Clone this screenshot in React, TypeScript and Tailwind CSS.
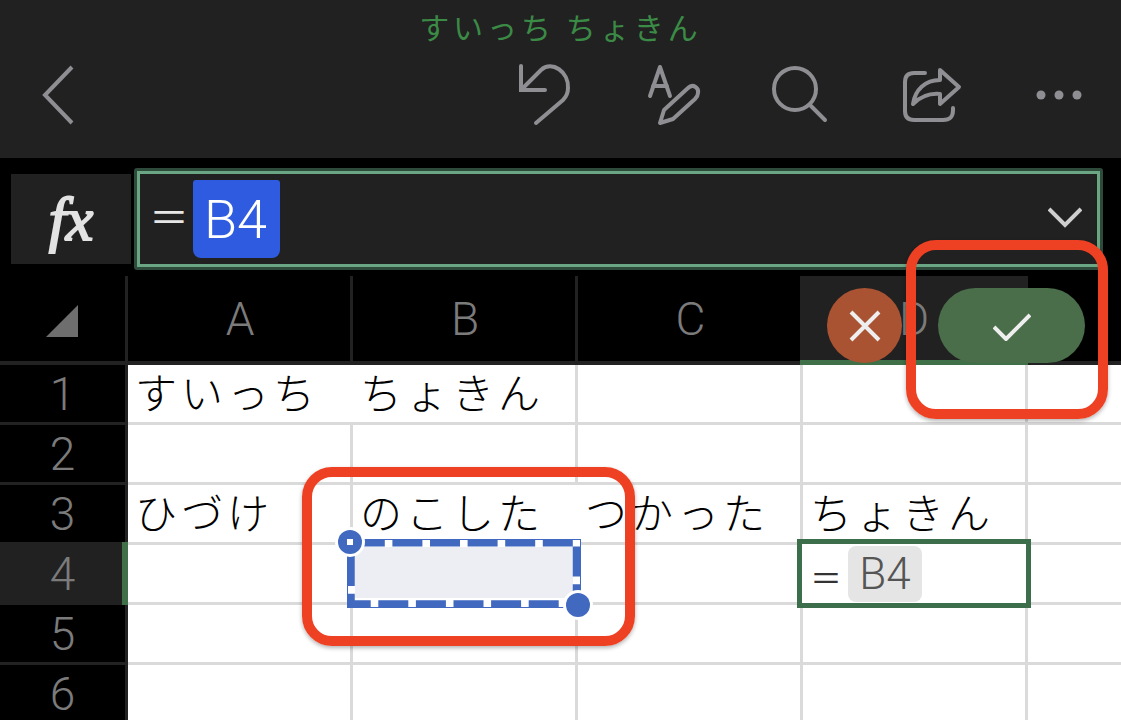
const jp = "font-['Noto_Sans_CJK_JP',sans-serif]";
const latin = "font-['Roboto',sans-serif] font-light";

function TopBar() {
  return (
    <header className="h-[158px] bg-[#212121]">
      <p className={`pt-[5px] text-center text-[30px] leading-[42px] tracking-[4px] text-[#3b8a46] ${jp}`}>
        すいっち ちょきん
      </p>
      <div className="mt-[13px] flex h-[70px] pl-[35px] text-[#8e8e93]">
        <svg width="45" height="70" viewBox="35 62 45 70" fill="none" stroke="currentColor" strokeWidth="4">
          <path d="M72 69 L45 97 L72 125" />
        </svg>
        <svg className="ml-[430px]" width="70" height="70" viewBox="510 62 70 70" fill="none" stroke="currentColor" strokeWidth="4" strokeLinecap="round">
          <path d="M521 68 V92 H545 M522 91 L541 72 C552 62 569 74 568 90 C568 95 566 99 563 102 L536 125" />
        </svg>
        <svg className="ml-[60px]" width="65" height="70" viewBox="640 62 65 70" fill="none" stroke="currentColor" strokeWidth="4" strokeLinecap="round" strokeLinejoin="round">
          <path d="M650 98 L660 69 L670 98 M653 88 H667" />
          <path d="M660 125 L664 112 L688 90 C693 85 699 90 698 95 C698 97 697 99 695 101 L673 121 Z" />
        </svg>
        <svg className="ml-[60px]" width="70" height="70" viewBox="765 62 70 70" fill="none" stroke="currentColor" strokeWidth="4" strokeLinecap="round">
          <circle cx="795" cy="91" r="21" />
          <path d="M810 107 L825 122" />
        </svg>
        <svg className="ml-[60px]" width="70" height="70" viewBox="895 62 70 70" fill="none" stroke="currentColor" strokeWidth="4" strokeLinecap="round" strokeLinejoin="round">
          <path d="M925 75 H914 C908 75 905 78 905 84 V113 C905 119 908 122 914 122 H943 C950 122 953 119 953 112 V110" />
          <path d="M940 72 L959 89 L940 106 V96 C928 95 920 99 913 106 C915 92 925 82 940 82 Z" />
        </svg>
        <svg className="ml-[65px]" width="60" height="70" viewBox="1030 62 60 70" fill="currentColor">
          <circle cx="1041" cy="97" r="4.5" />
          <circle cx="1059" cy="97" r="4.5" />
          <circle cx="1077" cy="97" r="4.5" />
        </svg>
      </div>
    </header>
  );
}

function FormulaBar() {
  return (
    <div className="flex h-[118px] items-start bg-black pl-[11px] pt-[10px]">
      <div className="mt-[6px] flex h-[90px] w-[120px] items-center justify-center bg-[#212121] font-['Liberation_Serif',serif] text-[62px] leading-none italic text-[#e2e2e2] [-webkit-text-stroke:2px_#e2e2e2]">
        fx
      </div>
      <div className="ml-[3px] h-[102px] w-[969px] rounded-[3px] border-[3px] border-[#2e4a3b]">
        <div className="flex h-full items-center border-[3px] border-[#6aa584] bg-[#212121] pl-[5px] pr-[15px]">
          <span className={`flex w-[48px] justify-center pb-[8px] text-[40px] leading-none text-[#e6e6e6] ${jp}`}>＝</span>
          <span className={`flex h-[78px] w-[87px] items-center justify-center rounded-b-[8px] rounded-t-[3px] bg-[#2f5be0] pr-[2px] text-[54px] text-white ${latin}`}>
            B4
          </span>
          <svg className="mb-[4px] ml-auto" width="34" height="22" viewBox="0 0 34 22" fill="none" stroke="#cfcfcf" strokeWidth="4">
            <path d="M1 3 L17 19 L33 3" />
          </svg>
        </div>
      </div>
    </div>
  );
}

function ColumnHeader() {
  return (
    <div className={`grid h-[89px] grid-cols-[128px_repeat(4,225px)_1fr] border-b-[4px] border-[#222222] bg-black text-[46px] text-[#7b7b7b] ${latin}`}>
      <div className="flex items-center border-r-[3px] border-[#222222] pl-[46px]">
        <svg width="32" height="32" viewBox="0 0 32 32" fill="#6e6e6e" className="mt-[4px]">
          <path d="M0 32 L32 0 V32 Z" />
        </svg>
      </div>
      <div className="flex items-center justify-center border-r-[3px] border-[#222222] pl-[2px] pt-[2px]">A</div>
      <div className="flex items-center justify-center border-r-[3px] border-[#222222] pl-[2px] pt-[2px]">B</div>
      <div className="flex items-center justify-center pt-[2px]">C</div>
      <div className="-ml-[3px] -mb-[4px] flex items-center justify-center border-b-[5px] border-[#3f7048] bg-[#212121] pt-[2px]">D</div>
      <div />
    </div>
  );
}

const rows: { n: number; cells: string[]; active?: boolean }[] = [
  { n: 1, cells: ["すいっち", "ちょきん", "", ""] },
  { n: 2, cells: ["", "", "", ""] },
  { n: 3, cells: ["ひづけ", "のこした", "つかった", "ちょきん"] },
  { n: 4, cells: ["", "", "", ""], active: true },
  { n: 5, cells: ["", "", "", ""] },
  { n: 6, cells: ["", "", "", ""] },
];

function Sheet() {
  return (
    <div className="bg-white">
      {rows.map((row) => (
        <div key={row.n} className="grid h-[60px] grid-cols-[128px_repeat(4,225px)_1fr] grid-rows-[60px]">
          <div
            className={`flex items-center justify-center text-[46px] leading-none text-[#7b7b7b] ${latin} ${
              row.active
                ? "-mt-[3px] border-r-[6px] border-r-[#3f7048] bg-[#212121] pl-[3px]"
                : "border-b-[3px] border-r-[3px] border-[#222222] bg-black"
            }`}
          >
            {row.n}
          </div>
          {row.cells.map((text, i) => (
            <div
              key={i}
              className={`flex items-center whitespace-nowrap border-b-[3px] border-[#dadada] pb-[6px] pl-[7px] text-[42px] font-light leading-none tracking-[4px] text-black ${jp} ${
                (row.n === 1 && i === 0) || (row.n === 3 && i === 1) ? "" : "border-r-[3px]"
              }`}
            >
              {text}
            </div>
          ))}
          <div className="border-b-[3px] border-[#dadada]" />
        </div>
      ))}
    </div>
  );
}

function RangeSelection() {
  return (
    <div className="absolute left-[335px] top-[525px] h-[95px] w-[260px]">
      <svg width="260" height="95" viewBox="335 525 260 95">
        <rect x="347" y="539" width="234" height="69" fill="#ffffff" />
        <rect x="355" y="547" width="218" height="51" fill="#edeef3" />
        <rect x="351" y="542.7" width="225.5" height="61.3" fill="none" stroke="#4169c0" strokeWidth="7.5" strokeDasharray="30 7.6" strokeDashoffset="-3.8" />
        <rect x="347.5" y="539.5" width="233" height="68" fill="none" stroke="#4169c0" strokeWidth="1" />
        <circle cx="350" cy="542" r="15" fill="#ffffff" />
        <circle cx="350" cy="542" r="12" fill="#4169c0" />
        <rect x="347" y="539" width="6" height="6" fill="#ffffff" />
        <circle cx="578" cy="605" r="15" fill="#ffffff" />
        <circle cx="578" cy="605" r="12" fill="#4169c0" />
      </svg>
    </div>
  );
}

function ActiveCell() {
  return (
    <div className="absolute left-[797px] top-[539px] flex h-[69px] w-[234px] items-center border-[5px] border-[#3d6e4b] bg-white pl-[2px]">
      <span className={`flex w-[44px] justify-center pt-[4px] text-[32px] leading-none text-[#333333] ${jp}`}>＝</span>
      <span className={`flex h-[56px] w-[74px] items-center justify-center rounded-[8px] bg-[#e5e5e5] text-[44px] text-[#555555] ${latin}`}>
        B4
      </span>
    </div>
  );
}

function EditButtons() {
  return (
    <>
      <div className="absolute left-[827px] top-[288px] flex h-[75px] w-[75px] items-center justify-center rounded-full bg-[#a95333]">
        <svg width="32" height="32" viewBox="0 0 32 32" stroke="#eeeeee" strokeWidth="4" fill="none">
          <path d="M2 2 L30 30 M30 2 L2 30" />
        </svg>
      </div>
      <div className="absolute left-[938px] top-[288px] flex h-[75px] w-[147px] items-center justify-center rounded-full bg-[#4a6d4a] pt-[3px]">
        <svg width="38" height="28" viewBox="0 0 38 28" stroke="#eeeeee" strokeWidth="4" fill="none">
          <path d="M1 14 L13 26 L37 2" />
        </svg>
      </div>
    </>
  );
}

export default function App() {
  return (
    <div className="relative h-[720px] w-[1121px] overflow-hidden bg-black">
      <TopBar />
      <FormulaBar />
      <ColumnHeader />
      <Sheet />
      <RangeSelection />
      <ActiveCell />
      <EditButtons />
      {/* red callouts drawn on top of the screenshot */}
      <div className="absolute left-[906px] top-[240px] h-[179px] w-[202px] rounded-[30px] border-[10px] border-[#ee4023] shadow-[0_2px_4px_rgba(0,0,0,0.3)]" />
      <div className="absolute left-[302px] top-[467px] h-[179px] w-[333px] rounded-[30px] border-[10px] border-[#ee4023] shadow-[0_2px_4px_rgba(0,0,0,0.3)]" />
    </div>
  );
}
